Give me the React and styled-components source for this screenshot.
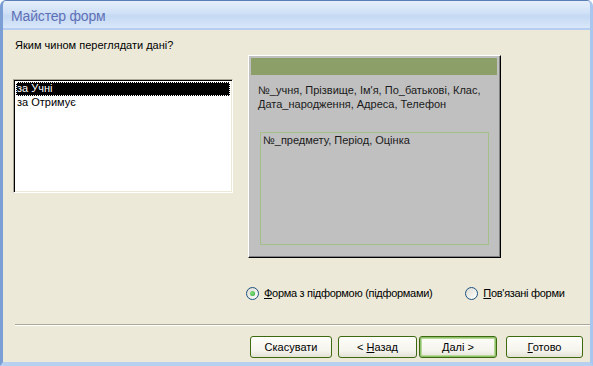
import React from 'react';
import styled, { createGlobalStyle } from 'styled-components';

const GlobalStyle = createGlobalStyle`
    html, body {
        margin: 0;
        padding: 0;
        background: #ffffff;
    }
    * {
        box-sizing: border-box;
    }
`;

const Window = styled.div`
    width: 593px;
    height: 366px;
    display: flex;
    flex-direction: column;
    background: #ece9d8;
    border-left: 3px solid #7b9fd4;
    border-right: 3px solid #a9c6ee;
    border-bottom: 4px solid #b7d0f0;
    border-top: 1px solid #5a7fb8;
    border-top-left-radius: 6px;
    border-top-right-radius: 6px;
    overflow: hidden;
    font-family: "Liberation Sans", Arial, sans-serif;
    font-size: 11px;
    color: #000;
`;

const TitleBar = styled.div`
    height: 29px;
    flex-shrink: 0;
    display: flex;
    align-items: center;
    padding: 3px 0 0 8px;
    background: linear-gradient(#e6effb, #cfe0f6 45%, #c4d9f3 55%, #d9e7f9);
    border-bottom: 2px solid #b6cff0;
    color: #5f70b6;
    font-size: 14px;
    letter-spacing: -0.2px;
`;

const Body = styled.div`
    flex: 1;
    display: flex;
    flex-direction: column;
    padding: 8px 0 0 10px;
`;

const Question = styled.div`
    height: 14px;
    line-height: 14px;
    margin-left: 2px;
`;

const MainRow = styled.div`
    display: flex;
    align-items: flex-start;
    margin-top: 3px;
    gap: 15px;
`;

const ListBox = styled.div`
    width: 220px;
    height: 114px;
    margin-top: 24px;
    background: #fff;
    border: 1px solid;
    border-color: #aca899 #fff #fff #aca899;
    box-shadow: inset 1px 1px 0 #000, inset -1px -1px 0 #ece9d8;
    padding: 2px;
`;

const ListItem = styled.div`
    height: 14px;
    line-height: 13px;
    padding-left: 1px;
    white-space: nowrap;
    background: ${p => (p.$selected ? '#000' : 'transparent')};
    color: ${p => (p.$selected ? '#fff' : '#000')};
    outline: ${p => (p.$selected ? '1px dotted #fff' : 'none')};
    outline-offset: -1px;
`;

const Preview = styled.div`
    width: 253px;
    height: 203px;
    background: #c0c0c0;
    border: 1px solid;
    border-color: #fff #000 #000 #fff;
    box-shadow: inset -1px -1px 0 #808080;
    padding: 2px 3px 0 2px;
    display: flex;
    flex-direction: column;
`;

const PreviewHeader = styled.div`
    height: 17px;
    background: #8c9f68;
`;

const FieldsText = styled.div`
    margin: 8px 0 0 7px;
    line-height: 14px;
    color: #1a1a1a;
`;

const SubForm = styled.div`
    margin: 21px 0 0 9px;
    width: 229px;
    height: 113px;
    border: 1px solid #a3c08a;
    padding: 1px 0 0 2px;
    color: #1a1a1a;
`;

const RadioRow = styled.div`
    display: flex;
    align-items: center;
    height: 14px;
    margin-top: 28px;
    padding-left: 233px;
`;

const RadioLabel = styled.label`
    display: flex;
    align-items: center;
    gap: 5px;
    margin-right: ${p => p.$gap || 0}px;
    white-space: nowrap;
    letter-spacing: ${p => p.$tight ? '-0.3px' : '0'};
`;

const RadioCircle = styled.span`
    position: relative;
    width: 13px;
    height: 13px;
    border-radius: 50%;
    border: 1px solid #1c5180;
    background: linear-gradient(135deg, #dcdcd2, #fff);

    &::after {
        content: '';
        display: ${p => (p.$checked ? 'block' : 'none')};
        position: absolute;
        left: 3px;
        top: 3px;
        width: 5px;
        height: 5px;
        border-radius: 50%;
        background: radial-gradient(circle at 40% 40%, #8ee58e, #21a121);
    }
`;

const Key = styled.span`
    text-decoration: underline;
`;

const Separator = styled.div`
    margin-top: 24px;
    margin-left: 2px;
    height: 2px;
    border-top: 1px solid #aca899;
    border-bottom: 1px solid #fff;
`;

const ButtonRow = styled.div`
    display: flex;
    margin-top: 10px;
    padding-left: 237px;
`;

const Button = styled.button`
    width: ${p => p.$w}px;
    height: 22px;
    margin-right: ${p => p.$gap || 0}px;
    padding: 0;
    font-family: inherit;
    font-size: 11px;
    color: #000;
    border-radius: 3px;
    border: 1px solid #3d6a10;
    background: linear-gradient(#fefefa, #f4f3ec 70%, #e4e2d5);
    box-shadow: ${p => (p.$default ? 'inset 0 0 0 1px #8fc06a, inset 0 0 0 2px #b8d89a' : 'none')};
`;

const App = () => (
    <>
        <GlobalStyle />
        <Window>
            <TitleBar>Майстер форм</TitleBar>
            <Body>
                <Question>Яким чином переглядати дані?</Question>
                <MainRow>
                    <ListBox>
                        <ListItem $selected>за Учні</ListItem>
                        <ListItem>за Отримує</ListItem>
                    </ListBox>
                    <Preview>
                        <PreviewHeader />
                        <FieldsText>
                            №_учня, Прізвище, Ім'я, По_батькові, Клас,<br />
                            Дата_народження, Адреса, Телефон
                        </FieldsText>
                        <SubForm>№_предмету, Період, Оцінка</SubForm>
                    </Preview>
                </MainRow>
                <RadioRow>
                    <RadioLabel $gap={33} $tight>
                        <RadioCircle $checked />
                        <span><Key>Ф</Key>орма з підформою (підформами)</span>
                    </RadioLabel>
                    <RadioLabel $tight>
                        <RadioCircle />
                        <span><Key>П</Key>ов'язані форми</span>
                    </RadioLabel>
                </RadioRow>
                <Separator />
                <ButtonRow>
                    <Button $w={82} $gap={6}>Скасувати</Button>
                    <Button $w={79} $gap={2}>&lt; <Key>Н</Key>азад</Button>
                    <Button $w={78} $gap={9} $default><Key>Д</Key>алі &gt;</Button>
                    <Button $w={77}><Key>Г</Key>отово</Button>
                </ButtonRow>
            </Body>
        </Window>
    </>
);

export default App;
